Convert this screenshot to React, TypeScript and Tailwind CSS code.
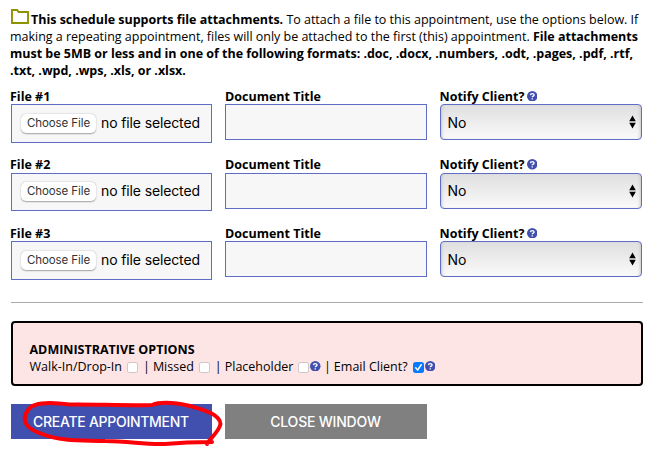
import { useState } from "react";
import clsx from "clsx";

const files = [1, 2, 3];

export default function App() {
  return (
    <main className="relative h-[454px] w-[654px] overflow-hidden bg-white pt-[11px] pl-[11px] font-['Open_Sans',sans-serif] text-[12.5px] leading-[17px] text-black">
      <Intro />

      <div className="mt-[9px] flex flex-col gap-[14px]">
        {files.map((n) => (
          <AttachmentRow key={n} number={n} />
        ))}
      </div>

      <hr className="mt-[22px] w-[632px] border-t border-[#a9a9a9]" />

      <AdminOptions />

      {/* Form actions */}
      <div className="mt-[18px] flex gap-[13px] font-[Inter,sans-serif] text-[14px] font-medium text-white">
        <button className="relative h-[35px] w-[201px] bg-[#414fae]">
          <span className="-ml-[1px] tracking-[-0.28px]">CREATE APPOINTMENT</span>
          <MarkerCircle />
        </button>
        <button className="h-[35px] w-[202px] bg-[#808080] pr-[1px] tracking-[-0.2px]">CLOSE WINDOW</button>
      </div>
    </main>
  );
}

function Intro() {
  return (
    <div className="-ml-[1px] tracking-[-0.018px] whitespace-nowrap">
      <p className="flex h-[17px]">
        <svg className="-mt-[2px] mr-[2px] ml-[1px] h-[16px] w-[18px] shrink-0" viewBox="0 0 18 16">
          <path d="M1 14V1h5.2l1.3 2H17v11z" fill="white" stroke="#8f9300" strokeWidth="1.9" />
        </svg>
        <span className="whitespace-pre">
          <b>This schedule supports file attachments.</b> To attach a file to this appointment, use the options below. If
        </span>
      </p>
      <p>
        making a repeating appointment, files will only be attached to the first (this) appointment. <b>File attachments</b>
      </p>
      <p className="font-bold">
        must be 5MB or less and in one of the following formats: .doc, .docx, .numbers, .odt, .pages, .pdf, .rtf,
      </p>
      <p className="font-bold">.txt, .wpd, .wps, .xls, or .xlsx.</p>
    </div>
  );
}

function AttachmentRow({ number }: { number: number }) {
  return (
    <div className="flex h-[54.5px] gap-[13px]">
      <div className="w-[201px]">
        <div className="-mt-[0.1px] -ml-[1px] h-[16.1px] font-bold">File #{number}</div>
        <div className="flex h-[38.5px] items-center border border-[#5f6dc5] bg-[#f7f7f7] pl-[9px] font-[Inter,sans-serif]">
          <button className="h-[19px] w-[75px] rounded-[5px] bg-white text-[11.5px] leading-[19px] tracking-[-0.1px] text-[#333] shadow-[0_0.5px_1.5px_rgba(0,0,0,0.35)]">
            Choose File
          </button>
          <span className="-mt-[2px] ml-[5px] text-[14px] tracking-[-0.13px] whitespace-nowrap">no file selected</span>
        </div>
      </div>

      <div className="w-[202px]">
        <div className="-mt-[0.1px] h-[16.1px] font-bold">Document Title</div>
        <input type="text" className="block h-[36px] w-full border border-[#5f6dc5] bg-[#f7f7f7] px-2 outline-none" />
      </div>

      <div className="w-[202px]">
        <div className="-mt-[0.1px] -ml-[0.5px] flex h-[16.1px] font-bold">
          Notify Client?
          <HelpIcon className="mt-[3px] ml-[2.5px]" />
        </div>
        <button className="flex h-[36px] w-full items-center justify-between rounded-[4px] border border-[#5f6dc5] bg-linear-to-b from-[#dfdfdf] to-[#fafafa] pr-[5px] pl-[6.5px] font-[Inter,sans-serif] text-[14px] shadow-[inset_3px_0_3px_-2px_#c8c8c8,inset_-3px_0_3px_-2px_#c8c8c8]">
          No
          <svg className="h-[14px] w-[7px]" viewBox="0 0 7 14">
            <path d="M3.5 .6L6.8 6.2H.2zM3.5 13.4L.2 7.8h6.6z" fill="black" />
          </svg>
        </button>
      </div>
    </div>
  );
}

function AdminOptions() {
  return (
    <section className="mt-[18px] h-[65px] w-[632px] rounded-[4px] border-2 border-black bg-[#fde5e5] pt-[18px] pl-[17px] whitespace-nowrap">
      <h2 className="-ml-[0.5px] font-bold">ADMINISTRATIVE OPTIONS</h2>
      <div className="-ml-[0.5px] flex">
        <Option label="Walk-In/Drop-In" />
        <span className="mr-[3px] ml-[5px]">|</span>
        <Option label="Missed" />
        <span className="mr-[3px] ml-[5px]">|</span>
        <Option label="Placeholder" help />
        <span className="mx-[3px]">|</span>
        <Option label="Email Client?" defaultChecked help />
      </div>
    </section>
  );
}

interface OptionProps {
  label: string;
  help?: boolean;
  defaultChecked?: boolean;
}

function Option({ label, help, defaultChecked = false }: OptionProps) {
  const [checked, setChecked] = useState(defaultChecked);

  return (
    <span className="flex items-center">
      {label}
      <button
        role="checkbox"
        aria-checked={checked}
        onClick={() => setChecked(!checked)}
        className={clsx(
          "mt-[2px] ml-[5px] h-[11px] w-[11px] rounded-[2.5px]",
          checked ? "bg-[#087aff]" : "bg-white shadow-[inset_0_0_0_1px_#d2c6c6]"
        )}
      >
        {checked && (
          <svg viewBox="0 0 11 11" className="block h-full w-full">
            <path d="M2.7 5.8l2 2.2 3.6-5.3" fill="none" stroke="white" strokeWidth="1.5" strokeLinecap="round" />
          </svg>
        )}
      </button>
      {help && <HelpIcon className="ml-[1px]" />}
    </span>
  );
}

function HelpIcon({ className }: { className?: string }) {
  return (
    <svg className={clsx("h-[10.5px] w-[10.5px] shrink-0", className)} viewBox="0 0 10 10">
      <circle cx="5" cy="5" r="5" fill="#414fae" />
      <path d="M3.3 3.9C3.4 1.9 6.8 2 6.7 3.9C6.6 4.9 5.1 4.8 5 6M5 6.9v1.3" fill="none" stroke="white" strokeWidth="1.3" />
    </svg>
  );
}

// Hand-drawn highlight around the create button
function MarkerCircle() {
  return (
    <svg className="pointer-events-none absolute top-[-5px] left-[9px] h-[48px] w-[204px]" viewBox="20 399 204 48">
      <path
        d="M152 405C125 406 95 404 69 404.5C51 402 33 402 28 410C20 421 27 429 42 434C62 442 85 440 105 441C130 441 145 445 165 444L187 442.5L212 442M207 444C210 438 219 432 220.5 424C220 414 203 410 190 406C177 403 163 400.5 152 405"
        fill="none"
        stroke="#fb0007"
        strokeWidth="4"
        strokeLinecap="round"
        strokeLinejoin="round"
      />
    </svg>
  );
}
